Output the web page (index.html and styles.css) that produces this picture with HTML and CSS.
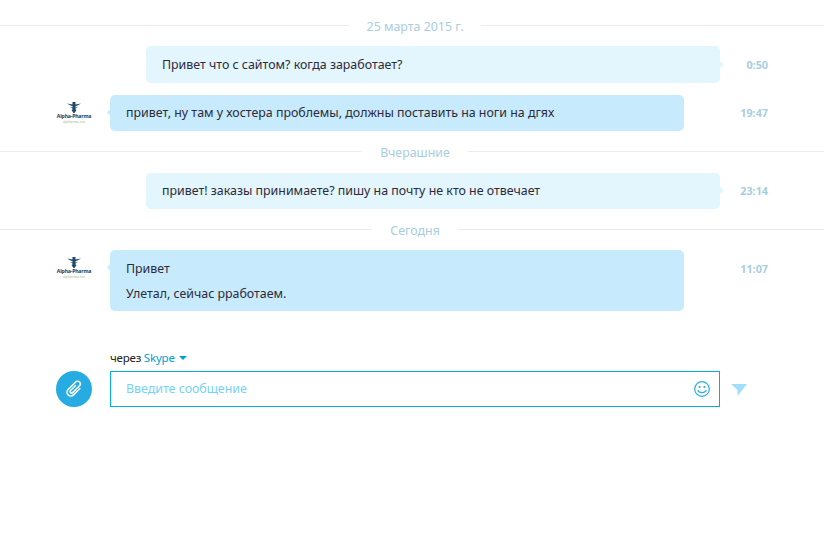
FILE: index.html
```html
<!DOCTYPE html>
<html lang="ru">
<head>
<meta charset="utf-8">
<title>Чат</title>
<link rel="stylesheet" href="styles.css">
</head>
<body>
<main class="chat">
  <div class="day day-first"><span>25 марта 2015 г.</span></div>

  <div class="msg msg-own">
    <div class="bubble bubble-own bubble-first"><p>Привет что с сайтом? когда заработает?</p></div>
    <time class="time">0:50</time>
  </div>

  <div class="msg msg-in msg-gap">
    <div class="avatar">
      <svg class="logo-mark" viewBox="0 0 14 11" width="14" height="11" aria-hidden="true"><path d="M0 1.500 5.500 2.500V0H8.500V2.500L14 1.500 10 3.800 8.500 4V5.500L11 5 8.500 6.500V7.500L9.500 8 7.500 11H6.500L4.500 8 5.500 7.500V6.500L3 5 5.500 5.500V4L4 3.800Z" fill="#1f4a6b"/></svg>
      <span class="logo-name">Alpha-Pharma</span>
      <span class="logo-url">alpharma.net</span>
    </div>
    <div class="bubble bubble-in"><p>привет, ну там у хостера проблемы, должны поставить на ноги на дгях</p></div>
    <time class="time">19:47</time>
  </div>

  <div class="day day-second"><span>Вчерашние</span></div>

  <div class="msg msg-own">
    <div class="bubble bubble-own"><p>привет! заказы принимаете? пишу на почту не кто не отвечает</p></div>
    <time class="time">23:14</time>
  </div>

  <div class="day day-third"><span>Сегодня</span></div>

  <div class="msg msg-in">
    <div class="avatar">
      <svg class="logo-mark" viewBox="0 0 14 11" width="14" height="11" aria-hidden="true"><path d="M0 1.500 5.500 2.500V0H8.500V2.500L14 1.500 10 3.800 8.500 4V5.500L11 5 8.500 6.500V7.500L9.500 8 7.500 11H6.500L4.500 8 5.500 7.500V6.500L3 5 5.500 5.500V4L4 3.800Z" fill="#1f4a6b"/></svg>
      <span class="logo-name">Alpha-Pharma</span>
      <span class="logo-url">alpharma.net</span>
    </div>
    <div class="bubble bubble-in bubble-tall"><p>Привет</p><p>Улетал, сейчас рработаем.</p></div>
    <time class="time">11:07</time>
  </div>

  <section class="composer">
    <div class="via">через <a href="#">Skype</a><i class="caret"></i></div>
    <div class="compose-row">
      <button class="attach" type="button" aria-label="Вложить">
        <svg viewBox="0 0 22 22" width="22" height="22" aria-hidden="true"><g transform="rotate(45 11 11)"><path d="M14.800 6.500V15.500A3.800 3.800 0 0 1 7.200 15.500V4.800A2.700 2.700 0 0 1 12.600 4.800V14.500A1.500 1.500 0 0 1 9.600 14.500V7.500" fill="none" stroke="#fff" stroke-width="1.500" stroke-linecap="round"/></g></svg>
      </button>
      <div class="field">
        <span class="placeholder">Введите сообщение</span>
        <svg class="smile" viewBox="0 0 16 16" width="16" height="16" aria-hidden="true"><circle cx="8" cy="8" r="7.300" fill="none" stroke="#27aee6" stroke-width="1.200"/><circle cx="5.600" cy="6" r="1.100" fill="#27aee6"/><circle cx="10.400" cy="6" r="1.100" fill="#27aee6"/><path d="M3.800 9.300C5 12.300 11 12.300 12.200 9.300" fill="none" stroke="#27aee6" stroke-width="1.300"/></svg>
      </div>
      <svg class="send" viewBox="0 0 16 12" width="16" height="12" aria-hidden="true"><path d="M0 0H16L6.500 12V6Z" fill="#9fdffb"/></svg>
    </div>
  </section>
</main>
</body>
</html>
```

FILE: styles.css
```css
* { box-sizing: border-box; }

html, body { margin: 0; padding: 0; background: #fff; }

body {
  width: 824px;
  height: 533px;
  overflow: hidden;
  font-family: "Noto Sans", "Open Sans", sans-serif;
  font-size: 12.400px;
  color: #2d2a3a;
}

p { margin: 0; }

.chat { padding-top: 17px; }

.day {
  display: flex;
  align-items: center;
  gap: 18px;
  height: 18px;
  font-size: 12.400px;
  color: #a9cde0;
}

.day::before, .day::after {
  content: "";
  height: 1px;
  background: #e8ecee;
  margin-top: -1px;
}

.day::before { flex: 1 1 6px; }
.day::after { flex: 1 1 0; }

.day span { white-space: nowrap; }

.day-first { margin-bottom: 11px; }
.day-second { margin-top: 12px; margin-bottom: 12px; }
.day-third { margin-top: 12px; margin-bottom: 11px; }

.msg {
  display: flex;
  align-items: flex-start;
  padding-right: 56px;
}

.msg-gap { margin-top: 12px; }

.msg-own { padding-left: 146px; }
.msg-in { padding-left: 56px; }

.bubble {
  position: relative;
  flex: 0 0 574px;
  padding: 9px 16px;
  border-radius: 5px;
  line-height: 18px;
}

.bubble-first { padding: 10px 16px 9px; }

.bubble-own { background: #e3f5fd; }

.bubble-own::after {
  content: "";
  position: absolute;
  top: 50%;
  right: -2.500px;
  width: 5px;
  height: 5px;
  margin-top: -3px;
  transform: rotate(45deg);
  border-radius: 1px;
  background: #e3f5fd;
}

.bubble-in { background: #c7ebfc; margin-left: 18px; }

.bubble-in::before {
  content: "";
  position: absolute;
  left: -2px;
  top: 15px;
  width: 5px;
  height: 5px;
  transform: rotate(45deg);
  border-radius: 1px;
  background: #c7ebfc;
}

.bubble-tall { padding: 10px 16px 8px; }
.bubble-tall p + p { margin-top: 7px; }

.time {
  margin-left: auto;
  font-size: 10.800px;
  font-weight: 700;
  line-height: 36px;
  color: #a9cde0;
}

.bubble-first + .time, .bubble-tall + .time { line-height: 37px; }

.avatar {
  display: flex;
  flex: 0 0 36px;
  width: 36px;
  min-width: 0;
  flex-direction: column;
  align-items: center;
  padding-top: 7px;
  line-height: 1;
}

.logo-name {
  height: 6px;
  font-size: 5.200px;
  line-height: 6px;
  font-weight: 700;
  letter-spacing: -0.2px;
  color: #1f3d58;
  white-space: nowrap;
}

.logo-url {
  height: 4px;
  margin-top: 1px;
  font-size: 3.500px;
  line-height: 4px;
  color: #9fb987;
  white-space: nowrap;
}

.composer { margin-top: 39px; }

.via {
  padding-left: 110px;
  height: 21px;
  font-size: 11.500px;
  line-height: 16px;
  letter-spacing: -0.2px;
  color: #222;
}

.via a { color: #00a0d6; text-decoration: none; }

.caret {
  display: inline-block;
  margin-left: 4px;
  vertical-align: 2px;
  border-left: 4px solid transparent;
  border-right: 4px solid transparent;
  border-top: 4px solid #00a0d6;
}

.compose-row {
  display: flex;
  align-items: center;
  padding-left: 56px;
}

.attach {
  display: flex;
  align-items: center;
  justify-content: center;
  flex: 0 0 36px;
  height: 36px;
  padding: 0;
  border: 0;
  border-radius: 50%;
  background: #26abe2;
}

.field {
  display: flex;
  align-items: center;
  justify-content: space-between;
  flex: 0 0 610px;
  height: 36px;
  margin-left: 18px;
  padding: 0 9px 2px 15px;
  border: 1px solid #00aeef;
}

.smile { margin-top: 2px; }

.placeholder { color: #76d2f7; font-size: 12.400px; }

.send { margin: 2px 0 0 11px; }
```
